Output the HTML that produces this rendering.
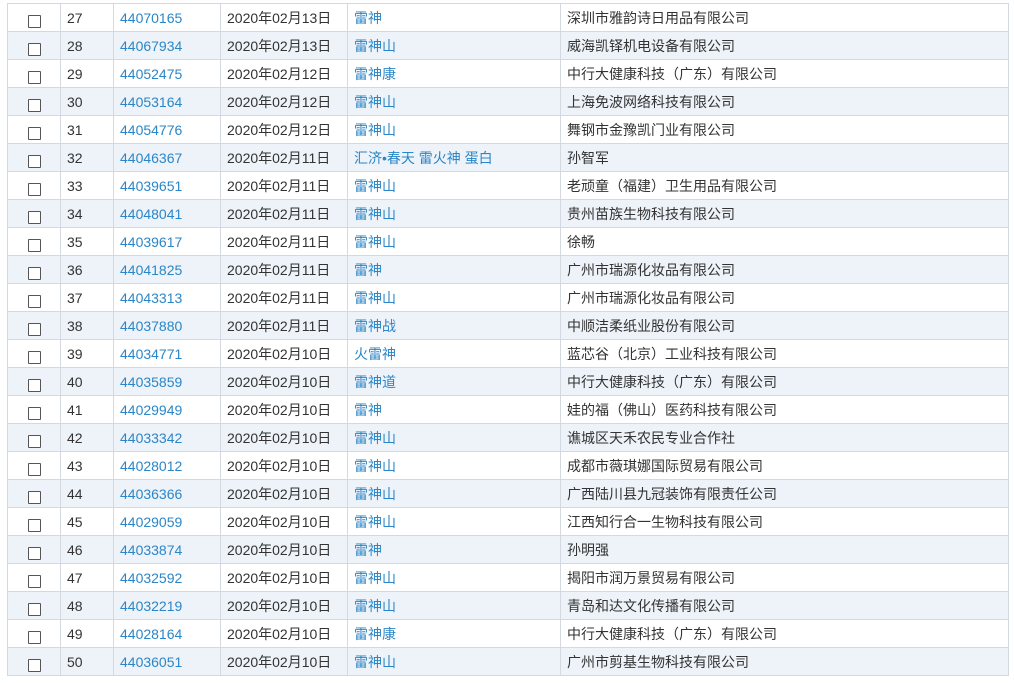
<!DOCTYPE html><html><head><meta charset="utf-8"><style>
body{margin:0;background:#fff;font-family:"Liberation Sans","Noto Sans CJK SC",sans-serif;font-size:14px;color:#333}
table{position:absolute;left:7px;top:3px;border-collapse:collapse;width:1002px;table-layout:fixed}
td{height:27px;border:1px solid #d4d9df;padding:0 0 0 6px;white-space:nowrap;overflow:hidden;line-height:27px}
td span.t{position:relative;top:1px}
tr:nth-child(even) td{background:#eef3f9}
td.c{text-align:center;padding:0}
a{color:#2a86c8;text-decoration:none}
.cb{display:inline-block;width:11px;height:11px;border:1px solid #555;background:#fff;vertical-align:middle;position:relative;top:3px;border-radius:1px}
</style></head><body><table>
<colgroup><col style="width:53px"><col style="width:53px"><col style="width:107px"><col style="width:127px"><col style="width:213px"><col></colgroup>
<tbody id="b"></tbody></table>
<script>
var d=[[27,"44070165","13","雷神","深圳市雅韵诗日用品有限公司"],[28,"44067934","13","雷神山","威海凯铎机电设备有限公司"],[29,"44052475","12","雷神康","中行大健康科技（广东）有限公司"],[30,"44053164","12","雷神山","上海免波网络科技有限公司"],[31,"44054776","12","雷神山","舞钢市金豫凯门业有限公司"],[32,"44046367","11","汇济•春天 雷火神 蛋白","孙智军"],[33,"44039651","11","雷神山","老顽童（福建）卫生用品有限公司"],[34,"44048041","11","雷神山","贵州苗族生物科技有限公司"],[35,"44039617","11","雷神山","徐畅"],[36,"44041825","11","雷神","广州市瑞源化妆品有限公司"],[37,"44043313","11","雷神山","广州市瑞源化妆品有限公司"],[38,"44037880","11","雷神战","中顺洁柔纸业股份有限公司"],[39,"44034771","10","火雷神","蓝芯谷（北京）工业科技有限公司"],[40,"44035859","10","雷神道","中行大健康科技（广东）有限公司"],[41,"44029949","10","雷神","娃的福（佛山）医药科技有限公司"],[42,"44033342","10","雷神山","谯城区天禾农民专业合作社"],[43,"44028012","10","雷神山","成都市薇琪娜国际贸易有限公司"],[44,"44036366","10","雷神山","广西陆川县九冠装饰有限责任公司"],[45,"44029059","10","雷神山","江西知行合一生物科技有限公司"],[46,"44033874","10","雷神","孙明强"],[47,"44032592","10","雷神山","揭阳市润万景贸易有限公司"],[48,"44032219","10","雷神山","青岛和达文化传播有限公司"],[49,"44028164","10","雷神康","中行大健康科技（广东）有限公司"],[50,"44036051","10","雷神山","广州市剪基生物科技有限公司"]];
var h="";d.forEach(function(r){h+='<tr><td class="c"><span class="cb"></span></td><td><span class="t">'+r[0]+'</span></td><td><span class="t"><a>'+r[1]+'</a></span></td><td><span class="t">2020年02月'+r[2]+'日</span></td><td><span class="t"><a>'+r[3]+'</a></span></td><td><span class="t">'+r[4]+'</span></td></tr>'});
document.getElementById("b").innerHTML=h;
</script></body></html>
